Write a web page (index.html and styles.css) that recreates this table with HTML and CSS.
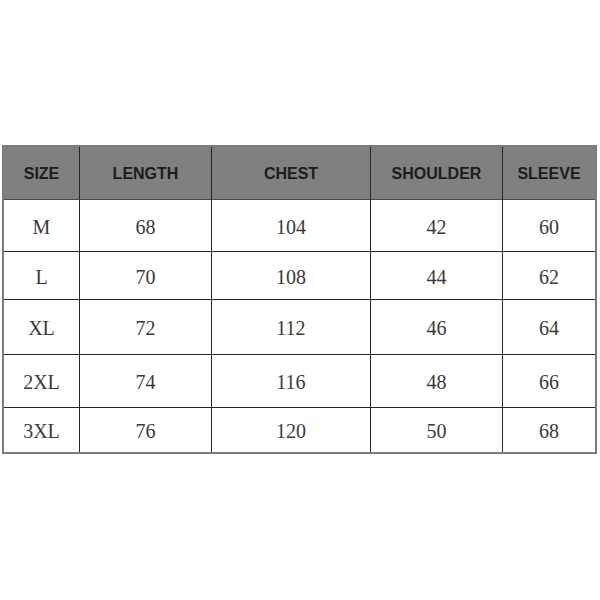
FILE: index.html
```html
<!DOCTYPE html>
<html>
<head>
<meta charset="utf-8">
<link rel="stylesheet" href="styles.css">
</head>
<body>
<div class="page">
  <div class="chart">
    <div class="cell head">SIZE</div>
    <div class="cell head">LENGTH</div>
    <div class="cell head">CHEST</div>
    <div class="cell head">SHOULDER</div>
    <div class="cell head last">SLEEVE</div>

    <div class="cell">M</div>
    <div class="cell">68</div>
    <div class="cell">104</div>
    <div class="cell">42</div>
    <div class="cell last">60</div>

    <div class="cell">L</div>
    <div class="cell">70</div>
    <div class="cell">108</div>
    <div class="cell">44</div>
    <div class="cell last">62</div>

    <div class="cell">XL</div>
    <div class="cell">72</div>
    <div class="cell">112</div>
    <div class="cell">46</div>
    <div class="cell last">64</div>

    <div class="cell">2XL</div>
    <div class="cell">74</div>
    <div class="cell">116</div>
    <div class="cell">48</div>
    <div class="cell last">66</div>

    <div class="cell bottom">3XL</div>
    <div class="cell bottom">76</div>
    <div class="cell bottom">120</div>
    <div class="cell bottom">50</div>
    <div class="cell bottom last">68</div>
  </div>
</div>
</body>
</html>
```
FILE: styles.css
```css
html, body {
  margin: 0;
  padding: 0;
  background: #ffffff;
}
.page {
  padding: 145px 0 0 2px;
}
.chart {
  display: grid;
  width: 591px;
  grid-template-columns: 76px 132px 159px 132px 92px;
  grid-template-rows: 53px 52px 48px 55px 53px 44px;
  border: 2px solid #7b7b7b;
}
.cell {
  display: flex;
  align-items: center;
  justify-content: center;
  padding-top: 3px;
  border-right: 1px solid #262626;
  border-bottom: 1px solid #262626;
  font-family: "Liberation Serif", "DejaVu Serif", serif;
  font-size: 20px;
  color: #3a3a3a;
}
.cell.head {
  padding-top: 1px;
  background: #808080;
  font-family: "Liberation Sans", Arial, sans-serif;
  font-weight: bold;
  font-size: 16px;
  color: #1c1c1c;
  border-bottom-color: #4a4a4a;
}
.cell.last {
  border-right: none;
}
.cell.bottom {
  border-bottom: none;
}
```
